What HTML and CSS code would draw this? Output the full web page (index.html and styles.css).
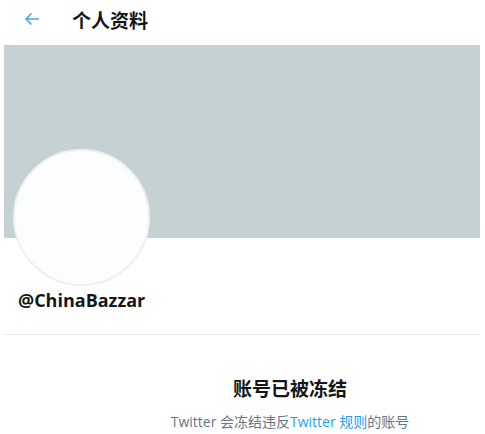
FILE: index.html
```html
<!DOCTYPE html>
<html lang="zh-CN">
<head>
  <meta charset="UTF-8">
  <meta name="viewport" content="width=device-width, initial-scale=1.0">
  <title>个人资料</title>
  <link rel="stylesheet" href="styles.css">
</head>
<body>
  <div class="page">
    <div class="topbar">
      <svg class="back" viewBox="0 0 18 18" width="18" height="18">
        <path d="M16 9H3M8.5 3.5 3 9l5.5 5.5" fill="none" stroke="#4aa8e8" stroke-width="1.6"/>
      </svg>
      <h1>个人资料</h1>
    </div>
    <div class="banner"></div>
    <div class="profile">
      <div class="avatar"></div>
      <div class="handle">@ChinaBazzar</div>
    </div>
    <div class="notice">
      <h2>账号已被冻结</h2>
      <p>Twitter 会冻结违反<a href="#">Twitter 规则</a>的账号</p>
    </div>
  </div>
</body>
</html>
```

FILE: styles.css
```css
body {
  margin: 0;
  background: #ffffff;
  font-family: "Open Sans", "Noto Sans CJK SC", sans-serif;
  color: #14171a;
}
.page {
  padding: 0 5px 0 4px;
}
.topbar {
  display: flex;
  align-items: center;
  height: 38px;
  padding-left: 19px;
}
.back {
  margin-right: 31px;
}
.topbar h1 {
  margin: 0;
  font-size: 19px;
  font-weight: 700;
  font-family: "Noto Sans CJK SC", sans-serif;
}
.banner {
  margin-top: 7px;
  height: 193px;
  background: #c6d1d4;
}
.profile {
  position: relative;
  height: 96px;
  border-bottom: 1px solid #e6ecf0;
}
.avatar {
  position: absolute;
  left: 9px;
  top: -89px;
  width: 133px;
  height: 133px;
  border-radius: 50%;
  background: #fcfdfe;
  border: 2px solid #edf1f3;
}
.handle {
  position: absolute;
  left: 14px;
  top: 50px;
  font-size: 18px;
  font-weight: 700;
}
.notice {
  text-align: center;
  padding-left: 96px;
  padding-top: 40px;
}
.notice h2 {
  margin: 0;
  font-size: 19px;
  font-weight: 700;
  font-family: "Noto Sans CJK SC", sans-serif;
  line-height: 26px;
}
.notice p {
  margin: 10px 0 0;
  font-size: 14px;
  color: #657786;
  font-family: "Open Sans", "Noto Sans CJK SC", sans-serif;
}
.notice a {
  color: #1da1f2;
  text-decoration: none;
}
```
